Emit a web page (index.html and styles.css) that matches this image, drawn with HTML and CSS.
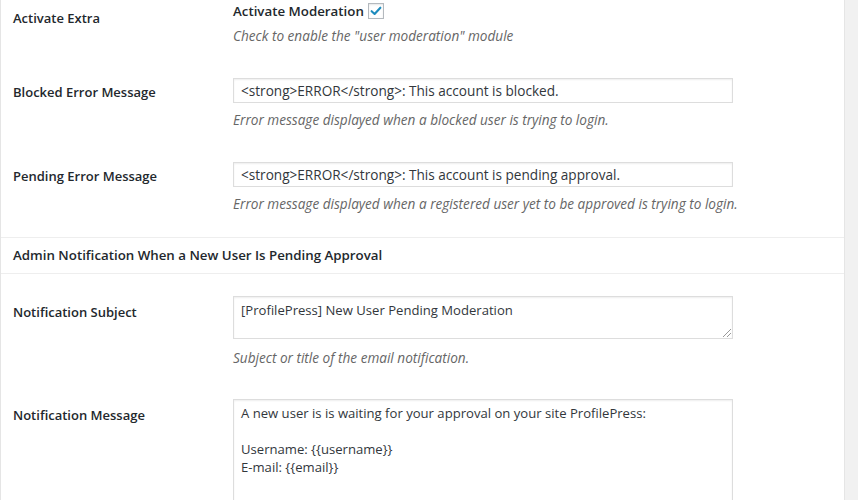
FILE: index.html
```html
<!DOCTYPE html>
<html lang="en">
<head>
  <meta charset="UTF-8" />
  <title>Moderation Settings</title>
  <link rel="stylesheet" href="styles.css">
</head>
<body>
  <div class="panel">
    <div class="settings">
      <div class="row first">
        <div class="label check-label">Activate Extra</div>
        <div class="field">
          <label class="check-line">
            Activate Moderation
            <span class="checkbox">
              <svg viewBox="0 0 16 16" width="14" height="14">
                <path d="M3 8.2 L6.4 11.4 L13 4.2" fill="none" stroke="#1e8cbe" stroke-width="2.4" stroke-linecap="round" stroke-linejoin="round"/>
              </svg>
            </span>
          </label>
          <p class="description">Check to enable the "user moderation" module</p>
        </div>
      </div>

      <div class="row">
        <div class="label">Blocked Error Message</div>
        <div class="field">
          <div class="text-input">&lt;strong&gt;ERROR&lt;/strong&gt;: This account is blocked.</div>
          <p class="description">Error message displayed when a blocked user is trying to login.</p>
        </div>
      </div>

      <div class="row">
        <div class="label">Pending Error Message</div>
        <div class="field">
          <div class="text-input">&lt;strong&gt;ERROR&lt;/strong&gt;: This account is pending approval.</div>
          <p class="description">Error message displayed when a registered user yet to be approved is trying to login.</p>
        </div>
      </div>
    </div>

    <div class="section-title">Admin Notification When a New User Is Pending Approval</div>

    <div class="settings">
      <div class="row after-title">
        <div class="label area-label">Notification Subject</div>
        <div class="field">
          <div class="text-area subject">[ProfilePress] New User Pending Moderation<span class="grip"></span></div>
          <p class="description">Subject or title of the email notification.</p>
        </div>
      </div>

      <div class="row">
        <div class="label area-label">Notification Message</div>
        <div class="field">
          <div class="text-area message">A new user is is waiting for your approval on your site ProfilePress:<br><br>Username: {{username}}<br>E-mail: {{email}}</div>
        </div>
      </div>
    </div>
  </div>
</body>
</html>
```

FILE: styles.css
```css
html, body {
  margin: 0;
  padding: 0;
}
body {
  font-family: "Open Sans", "Noto Sans", sans-serif;
  font-size: 13px;
  line-height: 20px;
  color: #23282d;
  background-color: #f1f1f1;
  height: 500px;
  overflow: hidden;
}
.panel {
  width: 845px;
  height: 500px;
  overflow: hidden;
  background-color: #fff;
  border-left: 1px solid #e5e5e5;
  border-right: 1px solid #e5e5e5;
  box-sizing: border-box;
}
.settings {
  padding-left: 12px;
}
.row {
  display: grid;
  grid-template-columns: 220px 500px;
  padding: 16px 0 16px;
}
.row.first {
  padding-top: 1px;
}
.row.after-title {
  padding: 22px 0 15px;
}
.label {
  font-weight: 600;
  padding-top: 4px;
}
.label.check-label {
  padding-top: 7px;
}
.label.area-label {
  padding-top: 6px;
}
.check-line {
  display: flex;
  align-items: center;
  gap: 4px;
  font-weight: 600;
  font-size: 13.3px;
}
.checkbox {
  width: 16px;
  height: 16px;
  border: 1px solid #b4b9be;
  box-sizing: border-box;
  box-shadow: inset 0 1px 2px rgba(0, 0, 0, 0.1);
  display: flex;
  align-items: center;
  justify-content: center;
}
.description {
  margin: 5px 0 0;
  font-style: italic;
  font-size: 13.6px;
  white-space: nowrap;
  color: #666;
}
.text-input {
  height: 25px;
  border: 1px solid #ddd;
  box-sizing: border-box;
  padding: 1px 7px;
  font-size: 13.6px;
  line-height: 21px;
  color: #32373c;
  box-shadow: inset 0 1px 2px rgba(0, 0, 0, 0.07);
}
.text-input + .description {
  margin-top: 7px;
}
.text-area {
  position: relative;
  border: 1px solid #ddd;
  box-sizing: border-box;
  padding: 4px 7px 3px;
  font-size: 13.1px;
  color: #32373c;
  line-height: 18px;
  box-shadow: inset 0 1px 2px rgba(0, 0, 0, 0.07);
}
.text-area.subject {
  height: 43px;
}
.text-area.subject + .description {
  margin-top: 9px;
}
.text-area.message {
  height: 110px;
  padding-top: 4px;
}
.grip {
  position: absolute;
  right: 1px;
  bottom: 1px;
  width: 8px;
  height: 8px;
  background: linear-gradient(135deg, transparent 45%, #999 45%, #999 55%, transparent 55%, transparent 70%, #999 70%, #999 80%, transparent 80%);
}
.section-title {
  margin-top: 7px;
  border-top: 1px solid #eee;
  border-bottom: 1px solid #eee;
  padding: 7px 12px 8px;
  font-weight: 600;
  font-size: 13.3px;
}
```
